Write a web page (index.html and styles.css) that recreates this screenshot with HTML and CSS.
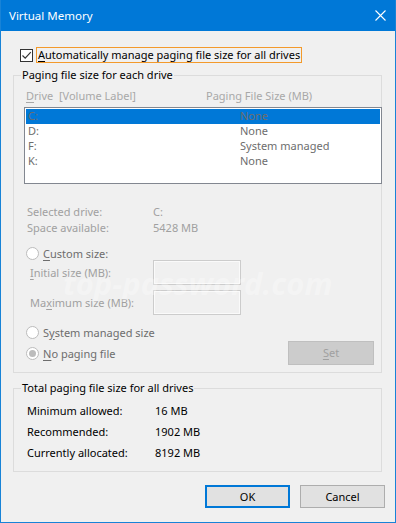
FILE: index.html
```html
<!DOCTYPE html>
<html lang="en">
<head>
    <meta charset="UTF-8">
    <title>Virtual Memory</title>
    <link rel="stylesheet" href="styles.css">
</head>
<body>
    <div class="window">
        <div class="titlebar">
            <span>Virtual Memory</span>
            <svg class="close" width="11" height="11" viewBox="0 0 11 11">
                <path d="M0.5 0.5 L10.5 10.5 M10.5 0.5 L0.5 10.5" stroke="#fff" stroke-width="1.1" fill="none"/>
            </svg>
        </div>

        <div class="content">
            <div class="auto">
                <span class="check">
                    <svg width="11" height="11" viewBox="0 0 11 11">
                        <path d="M1.5 5.5 L4.2 8.2 L9.8 2.2" stroke="#333" stroke-width="1.2" fill="none"/>
                    </svg>
                </span>
                <span class="focus"><u>A</u>utomatically manage paging file size for all drives</span>
            </div>

            <div class="group drives">
                <div class="group-title">Paging file size for each drive</div>
                <div class="list-head">
                    <span class="col1"><u>D</u>rive&nbsp;&nbsp;[Volume Label]</span>
                    <span>Paging File Size (MB)</span>
                </div>
                <div class="list">
                    <div class="row selected"><span class="col1">C:</span><span>None</span></div>
                    <div class="row"><span class="col1">D:</span><span>None</span></div>
                    <div class="row"><span class="col1">F:</span><span>System managed</span></div>
                    <div class="row"><span class="col1">K:</span><span>None</span></div>
                </div>

                <div class="info first"><span class="label">Selected drive:</span><span>C:</span></div>
                <div class="info"><span class="label">Space available:</span><span>5428 MB</span></div>

                <div class="radio-row custom"><span class="radio"></span><span><u>C</u>ustom size:</span></div>
                <div class="field initial"><span class="field-label"><u>I</u>nitial size (MB):</span><span class="box"></span></div>
                <div class="field maximum"><span class="field-label">Ma<u>x</u>imum size (MB):</span><span class="box"></span></div>

                <div class="radio-row system"><span class="radio"></span><span>S<u>y</u>stem managed size</span></div>
                <div class="last-row">
                    <div class="radio-row"><span class="radio on"></span><span><u>N</u>o paging file</span></div>
                    <div class="set"><u>S</u>et</div>
                </div>
            </div>

            <div class="group totals">
                <div class="group-title">Total paging file size for all drives</div>
                <div class="total"><span class="label">Minimum allowed:</span><span>16 MB</span></div>
                <div class="total"><span class="label">Recommended:</span><span>1902 MB</span></div>
                <div class="total"><span class="label">Currently allocated:</span><span>8192 MB</span></div>
            </div>
        </div>

        <div class="footer">
            <div class="btn default">OK</div>
            <div class="btn">Cancel</div>
        </div>

        <div class="watermark">top-password.com</div>
    </div>
</body>
</html>
```

FILE: styles.css
```css
body {
    margin: 0;
    font-family: "Noto Sans", "Open Sans", sans-serif;
    font-size: 11px;
    color: #000;
}
u {
    text-underline-offset: 2px;
}
.window {
    position: relative;
    width: 396px;
    height: 523px;
    box-sizing: border-box;
    border: 1px solid #1883d7;
    border-top: 0;
    background: #f0f0f0;
    overflow: hidden;
}
.titlebar {
    height: 31px;
    background: #0078d7;
    color: #fff;
    font-size: 11.5px;
    display: flex;
    align-items: center;
    justify-content: space-between;
    padding: 0 9px 0 8px;
}
.content {
    padding: 0 13px 0 12px;
}
.auto {
    display: flex;
    align-items: center;
    height: 16px;
    margin-top: 16px;
    padding-left: 7px;
}
.check {
    width: 13px;
    height: 13px;
    box-sizing: border-box;
    border: 1px solid #333;
    display: flex;
    align-items: center;
    justify-content: center;
    background: #fff;
    margin-right: 3px;
}
.focus {
    border: 1px solid #f39a2b;
    height: 16px;
    line-height: 14px;
    box-sizing: border-box;
    padding: 0 1px 0 1px;
}

/* group boxes */
.group {
    position: relative;
    border: 1px solid #dcdcdc;
}
.group-title {
    position: absolute;
    top: -9px;
    left: 7px;
    padding: 0 1px;
    line-height: 16px;
    background: #f0f0f0;
}
.drives {
    margin-top: 12px;
    padding: 12px 7px 7px 10px;
}
.list-head {
    display: flex;
    height: 15px;
    line-height: 15px;
    padding-left: 2px;
    color: #a8a8a8;
}
.list-head .col1 {
    width: 180px;
}
.list {
    margin-top: 4px;
    width: 358px;
    height: 77px;
    box-sizing: border-box;
    border: 1px solid #828790;
    background: #fff;
    padding: 1px;
}
.row {
    display: flex;
    height: 15px;
    line-height: 14px;
    padding-left: 2px;
    color: #6d6d6d;
}
.row .col1 {
    width: 212px;
}
.row.selected {
    background: #0078d7;
}
.info {
    display: flex;
    height: 16px;
    line-height: 16px;
    padding-left: 3px;
    color: #a0a0a0;
}
.info.first {
    margin-top: 20px;
}
.info .label {
    width: 126px;
}
.radio-row {
    display: flex;
    align-items: center;
    height: 16px;
    padding-left: 2px;
    color: #6d6d6d;
}
.radio {
    width: 13px;
    height: 13px;
    box-sizing: border-box;
    border: 1px solid #bcbcbc;
    border-radius: 50%;
    background: #fff;
    margin-right: 4px;
    display: flex;
    align-items: center;
    justify-content: center;
}
.radio.on::after {
    content: "";
    width: 7px;
    height: 7px;
    border-radius: 50%;
    background: #bcbcbc;
}
.custom {
    margin-top: 9px;
}
.field {
    display: flex;
    align-items: center;
    height: 25px;
    padding-left: 6px;
    color: #a0a0a0;
}
.field.initial {
    margin-top: -1px;
}
.field.maximum {
    margin-top: 5px;
}
.field-label {
    width: 123px;
}
.box {
    width: 88px;
    height: 25px;
    box-sizing: border-box;
    border: 1px solid #cccccc;
    box-shadow: inset 0 0 0 1px #fafafa;
}
.system {
    margin-top: 9px;
}
.last-row {
    display: flex;
    align-items: center;
    justify-content: space-between;
    height: 24px;
    margin-top: 1px;
}
.set {
    width: 86px;
    height: 24px;
    box-sizing: border-box;
    border: 1px solid #bfbfbf;
    background: #cccccc;
    color: #a0a0a0;
    text-align: center;
    line-height: 22px;
}
.totals {
    margin-top: 15px;
    padding: 11px 0 8px 13px;
}
.total {
    display: flex;
    height: 21px;
    line-height: 21px;
}
.total .label {
    width: 128px;
}

/* dialog buttons */
.footer {
    display: flex;
    justify-content: flex-end;
    gap: 10px;
    padding: 13px 10px 0 0;
}
.btn {
    width: 85px;
    height: 23px;
    box-sizing: border-box;
    border: 1px solid #adadad;
    background: #e1e1e1;
    text-align: center;
    line-height: 21px;
}
.btn.default {
    border: 2px solid #0078d7;
    line-height: 19px;
}
.watermark {
    position: absolute;
    left: 62px;
    top: 268px;
    font-family: "Open Sans", sans-serif;
    font-size: 31px;
    font-weight: bold;
    font-style: italic;
    line-height: 1;
    color: rgba(255, 255, 255, 0.3);
    pointer-events: none;
}
```
